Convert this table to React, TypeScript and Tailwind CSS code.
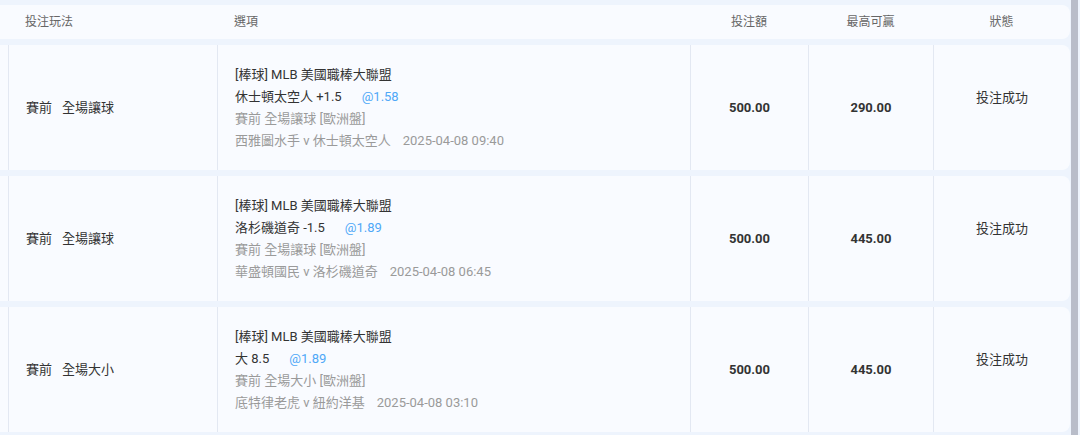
import React from 'react';

interface Bet {
    playType: [string, string];
    league: string;
    pick: string;
    odds: string;
    market: string;
    match: string;
    time: string;
    amount: string;
    maxWin: string;
    status: string;
}

const bets: Bet[] = [
    {
        playType: ['賽前', '全場讓球'],
        league: '[棒球] MLB 美國職棒大聯盟',
        pick: '休士頓太空人 +1.5',
        odds: '@1.58',
        market: '賽前 全場讓球 [歐洲盤]',
        match: '西雅圖水手 v 休士頓太空人',
        time: '2025-04-08 09:40',
        amount: '500.00',
        maxWin: '290.00',
        status: '投注成功',
    },
    {
        playType: ['賽前', '全場讓球'],
        league: '[棒球] MLB 美國職棒大聯盟',
        pick: '洛杉磯道奇 -1.5',
        odds: '@1.89',
        market: '賽前 全場讓球 [歐洲盤]',
        match: '華盛頓國民 v 洛杉磯道奇',
        time: '2025-04-08 06:45',
        amount: '500.00',
        maxWin: '445.00',
        status: '投注成功',
    },
    {
        playType: ['賽前', '全場大小'],
        league: '[棒球] MLB 美國職棒大聯盟',
        pick: '大 8.5',
        odds: '@1.89',
        market: '賽前 全場大小 [歐洲盤]',
        match: '底特律老虎 v 紐約洋基',
        time: '2025-04-08 03:10',
        amount: '500.00',
        maxWin: '445.00',
        status: '投注成功',
    },
];

function BetRow({ bet }: { bet: Bet }) {
    return (
        <div className="flex h-[125px] bg-[#f9fbff] rounded-r-lg">
            <div className="w-[8px] shrink-0" />
            <div className="w-[209px] shrink-0 border-l border-[#e3e8f2] pl-[17px] flex items-center text-[13px] text-[#333]">
                <span>{bet.playType[0]}</span>
                <span className="ml-[10px]">{bet.playType[1]}</span>
            </div>
            <div className="w-[473px] shrink-0 border-l border-[#e3e8f2] pl-[17px] flex flex-col justify-center text-[13px] leading-[22px]">
                <div className="text-[#333]">{bet.league}</div>
                <div className="text-[#333]">
                    {bet.pick}
                    <span className="ml-[20px] text-[#4fa8f7]">{bet.odds}</span>
                </div>
                <div className="text-[#9a9a9a]">{bet.market}</div>
                <div className="text-[#9a9a9a]">
                    {bet.match}
                    <span className="ml-[12px]">{bet.time}</span>
                </div>
            </div>
            <div className="w-[118px] shrink-0 border-l border-[#e3e8f2] flex items-center justify-center text-[13px] font-bold text-[#333]">
                {bet.amount}
            </div>
            <div className="w-[125px] shrink-0 border-l border-[#e3e8f2] flex items-center justify-center text-[13px] font-bold text-[#333]">
                {bet.maxWin}
            </div>
            <div className="flex-1 border-l border-[#e3e8f2] flex items-center justify-center pb-[20px] text-[13px] text-[#333]">
                {bet.status}
            </div>
        </div>
    );
}

export default function App() {
    return (
        <div
            className="w-[1080px] h-[435px] bg-[#eef4fd] flex overflow-hidden"
            style={{ fontFamily: 'Roboto, "Noto Sans CJK TC", sans-serif' }}
        >
            <div className="w-[1070px] shrink-0 pt-[5px] flex flex-col gap-[6px]">
                <div className="flex h-[34px] bg-[#f9fbff] rounded-r-lg text-[12px] text-[#666] items-center">
                    <div className="w-[8px] shrink-0" />
                    <div className="w-[209px] shrink-0 pl-[17px]">投注玩法</div>
                    <div className="w-[473px] shrink-0 pl-[17px]">選項</div>
                    <div className="w-[118px] shrink-0 text-center">投注額</div>
                    <div className="w-[125px] shrink-0 text-center">最高可贏</div>
                    <div className="flex-1 text-center">狀態</div>
                </div>
                {bets.map((bet, i) => (
                    <BetRow key={i} bet={bet} />
                ))}
            </div>
            <div className="w-[1px] shrink-0" />
            <div className="w-[7px] shrink-0 bg-[#b9bdc9]" />
        </div>
    );
}
